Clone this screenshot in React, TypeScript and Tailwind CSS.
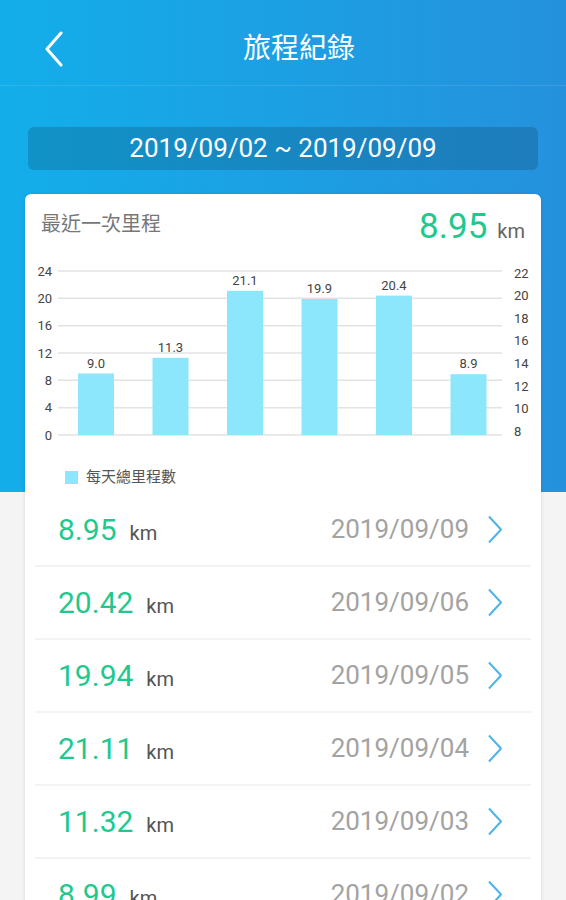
import React from 'react'

const FONT = "font-['Roboto','Noto_Sans_CJK_TC',sans-serif]"

const BARS = [9.0, 11.3, 21.1, 19.9, 20.4, 8.9]
const BAR_X = [53, 127.5, 202, 276.5, 351, 425.5]
const LEFT_TICKS = [24, 20, 16, 12, 8, 4, 0]
const RIGHT_TICKS = [22, 20, 18, 16, 14, 12, 10, 8]

const TRIPS = [
  { km: '8.95', date: '2019/09/09' },
  { km: '20.42', date: '2019/09/06' },
  { km: '19.94', date: '2019/09/05' },
  { km: '21.11', date: '2019/09/04' },
  { km: '11.32', date: '2019/09/03' },
  { km: '8.99', date: '2019/09/02' },
]

// chart is drawn in card-local x, svg-local y (0 line at 185, 24 at 21)
function Chart() {
  const base = 185
  const unit = (185 - 21) / 24
  return (
    <svg width="516" height="200" className="block">
      {LEFT_TICKS.map((t, i) => {
        const y = 21 + i * ((185 - 21) / 6)
        return (
          <g key={t}>
            <line x1="33" x2="477" y1={y} y2={y} stroke="#e3e3e3" strokeWidth="1.5" />
            <text x="27" y={y + 4.5} textAnchor="end" fontSize="13" fill="#444" fontFamily="Roboto, sans-serif">
              {t}
            </text>
          </g>
        )
      })}
      {RIGHT_TICKS.map((t, i) => (
        <text key={t} x="489" y={23 + i * 22.66 + 4.5} fontSize="13" fill="#444" fontFamily="Roboto, sans-serif">
          {t}
        </text>
      ))}
      {BARS.map((v, i) => {
        const top = base - v * unit
        return (
          <g key={i}>
            <rect x={BAR_X[i]} y={top} width="36" height={base - top} fill="#8ce6fc" />
            <text x={BAR_X[i] + 18} y={top - 6} textAnchor="middle" fontSize="13" fill="#444" fontFamily="Roboto, sans-serif">
              {v.toFixed(1)}
            </text>
          </g>
        )
      })}
    </svg>
  )
}

export default function App() {
  return (
    <div
      className={`${FONT} min-h-[900px] w-full overflow-hidden bg-[#f4f4f4] bg-[linear-gradient(90deg,#13aeea,#2591dd)] bg-no-repeat bg-[length:100%_492px]`}
    >
      {/* top bar */}
      <div className="flex h-[86px] items-center border-b border-white/10 pl-[44px] pr-[32px] pt-[12px]">
        <svg width="20" height="36" viewBox="0 0 20 36" className="shrink-0">
          <polyline points="17,2 3,18 17,34" fill="none" stroke="#fff" strokeWidth="3" strokeLinecap="round" strokeLinejoin="round" />
        </svg>
        <div className="flex-1 text-center text-[28px] text-white">旅程紀錄</div>
      </div>

      {/* date range */}
      <div className="mx-[28px] mt-[41px] flex h-[43px] items-center justify-center rounded-md bg-black/15 text-[26px] text-white">
        2019/09/02 ~ 2019/09/09
      </div>

      {/* card */}
      <div className="mx-[25px] mt-[24px] rounded-md bg-white shadow-[0_1px_4px_rgba(0,0,0,0.12)]">
        <div className="flex h-[56px] items-center justify-between px-[16px] pt-[4px]">
          <div className="text-[20px] text-[#777]">最近一次里程</div>
          <div className="flex items-baseline gap-[10px] pt-[6px]">
            <span className="text-[35px] text-[#1fc98e]">8.95</span>
            <span className="text-[20px] text-[#666]">km</span>
          </div>
        </div>

        <Chart />

        <div className="mt-[20px] flex h-[14px] items-center gap-[8px] pl-[40px]">
          <span className="h-[13px] w-[13px] bg-[#8ce6fc]" />
          <span className="text-[15px] text-[#555]">每天總里程數</span>
        </div>

        <div className="mt-[10px] px-[10px]">
          {TRIPS.map(t => (
            <div key={t.date} className="flex h-[73px] items-center border-b-2 border-[#f3f3f3] pl-[23px] pr-[28px]">
              <div className="flex flex-1 items-baseline gap-[13px]">
                <span className="text-[30px] text-[#1fc98e]">{t.km}</span>
                <span className="text-[20px] text-[#555]">km</span>
              </div>
              <span className="text-[26px] text-[#a3a3a3]">{t.date}</span>
              <svg width="16" height="29" viewBox="0 0 16 29" className="ml-[18px]">
                <polyline points="2,1.5 14,14.5 2,27.5" fill="none" stroke="#4cb4e8" strokeWidth="2" strokeLinejoin="round" />
              </svg>
            </div>
          ))}
        </div>
      </div>
    </div>
  )
}
